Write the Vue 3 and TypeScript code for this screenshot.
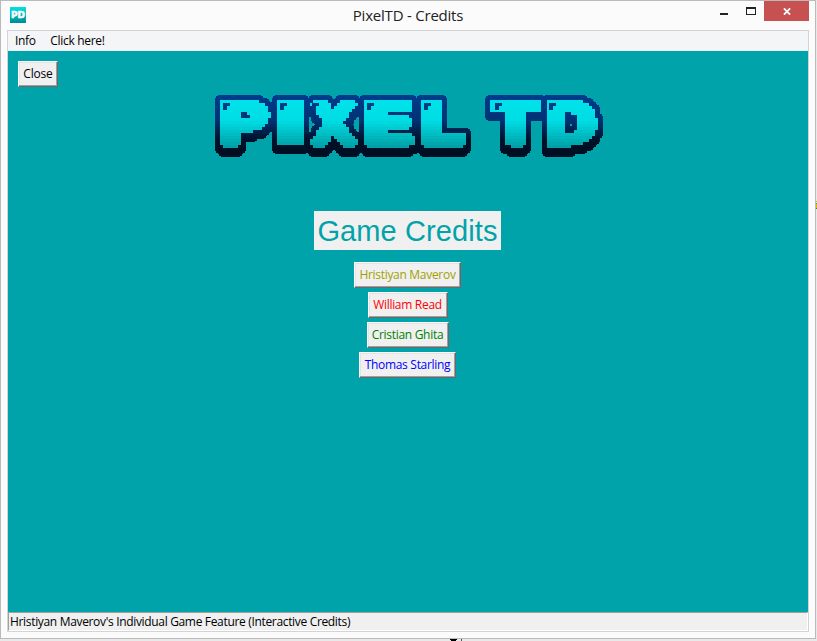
<script setup lang="ts">
interface Letter { char: string; x: number; sx: number }
interface Credit { name: string; color: string; width: number }

const menu = ['Info', 'Click here!']

const letters: Letter[] = [
  { char: 'P', x: 9.2, sx: 1.26 },
  { char: 'I', x: 62.9, sx: 1.85 },
  { char: 'X', x: 103.4, sx: 1.03 },
  { char: 'E', x: 152.6, sx: 1.46 },
  { char: 'L', x: 209.6, sx: 1.35 },
  { char: 'T', x: 285.7, sx: 1.15 },
  { char: 'D', x: 335, sx: 1.16 },
]
const glints = [15, 72, 104, 159, 216, 287, 341]

const place = (l: Letter) => `translate(${l.x} 53) scale(${l.sx} 1)`

const credits: Credit[] = [
  { name: 'Hristiyan Maverov', color: '#a2a000', width: 107 },
  { name: 'William Read', color: '#ff0000', width: 80 },
  { name: 'Cristian Ghita', color: '#008000', width: 82 },
  { name: 'Thomas Starling', color: '#0000ff', width: 97 },
]
</script>

<template>
  <div class="desktop">
    <div class="window">
      <header class="titlebar">
        <svg class="appicon" width="16" height="16" viewBox="0 0 16 16">
          <defs>
            <linearGradient id="ico" x1="0" y1="0" x2="0" y2="1">
              <stop offset="0" stop-color="#00e3e6" /><stop offset="1" stop-color="#008c94" />
            </linearGradient>
          </defs>
          <rect width="16" height="16" fill="url(#ico)" />
          <text x="1" y="10.9" class="icotext" textLength="14" lengthAdjust="spacingAndGlyphs">PD</text>
        </svg>
        <h1 class="title">PixelTD - Credits</h1>
        <div class="controls">
          <svg width="54" height="21" viewBox="0 0 54 21" shape-rendering="crispEdges">
            <path d="M10 12h8v2h-8z" fill="#222" />
            <path d="M36 6h10v8H36z M37 8v5h8V8z" fill="#222" fill-rule="evenodd" />
          </svg>
          <div class="close">
            <svg width="8" height="7" viewBox="0 0 8 7"><path d="M.9.4l6.2 6.2M7.1.4L.9 6.6" stroke="#fff" stroke-width="1.8" /></svg>
          </div>
        </div>
      </header>

      <div class="client">
        <nav class="menu"><span v-for="m in menu" :key="m">{{ m }}</span></nav>
        <main class="game">
          <button class="btn closebtn">Close</button>
          <svg class="logo" width="400" height="74" viewBox="0 0 400 74" role="img" aria-label="Pixel TD">
            <defs>
              <linearGradient id="rim" gradientUnits="userSpaceOnUse" x1="0" y1="4" x2="0" y2="64">
                <stop offset="0" stop-color="#003b8c" /><stop offset=".42" stop-color="#003375" />
                <stop offset=".75" stop-color="#001129" /><stop offset="1" stop-color="#000e22" />
              </linearGradient>
              <linearGradient id="face" gradientUnits="userSpaceOnUse" x1="0" y1="-45" x2="0" y2="4">
                <stop offset="0" stop-color="#00e3eb" /><stop offset=".45" stop-color="#00dce3" />
                <stop offset="1" stop-color="#009da3" />
              </linearGradient>
              <!-- samples one pixel per cell, then grows it to fill the cell -->
              <filter id="blocks" filterUnits="userSpaceOnUse" x="0" y="0" width="400" height="74" color-interpolation-filters="sRGB">
                <feFlood x="1" y="1" width="1" height="1" flood-color="#000" result="seed" />
                <feOffset in="seed" x="0" y="0" width="3" height="3" result="cell" />
                <feTile in="cell" result="grid" />
                <feComposite in="SourceGraphic" in2="grid" operator="in" />
                <feMorphology operator="dilate" radius="1" />
                <feComponentTransfer><feFuncA type="discrete" tableValues="0 1" /></feComponentTransfer>
              </filter>
              <!-- rounded ring plus a downward extrusion, as a white mask -->
              <filter id="extrude" filterUnits="userSpaceOnUse" x="0" y="0" width="400" height="74" color-interpolation-filters="sRGB">
                <feMorphology in="SourceGraphic" operator="dilate" radius="5 2" result="wide" />
                <feMorphology in="SourceGraphic" operator="dilate" radius="2 5" result="tall" />
                <feMorphology in="SourceGraphic" operator="dilate" radius="4 4" result="mid" />
                <feMerge result="ring"><feMergeNode in="wide" /><feMergeNode in="tall" /><feMergeNode in="mid" /></feMerge>
                <feOffset in="ring" dy="2" result="mid2" />
                <feOffset in="ring" dy="4" result="low" />
                <feMerge><feMergeNode in="ring" /><feMergeNode in="mid2" /><feMergeNode in="low" /></feMerge>
                <feColorMatrix values="0 0 0 0 1  0 0 0 0 1  0 0 0 0 1  0 0 0 1 0" />
              </filter>
              <mask id="rimshape" maskUnits="userSpaceOnUse" x="0" y="0" width="400" height="74">
                <g filter="url(#extrude)"><use href="#wordmark" /></g>
              </mask>
            </defs>
            <rect width="400" height="74" fill="url(#rim)" mask="url(#rimshape)" />
            <g id="wordmark" class="wordmark" filter="url(#blocks)">
              <text v-for="l in letters" :key="l.char" :transform="place(l)">{{ l.char }}</text>
            </g>
            <g fill="#003b85" shape-rendering="crispEdges">
              <path v-for="g in glints" :key="g" :d="`M${g} 12h7v3h-3v4h-4z`" />
            </g>
          </svg>
          <h2 class="heading">Game Credits</h2>
          <div class="credits">
            <button v-for="c in credits" :key="c.name" class="btn" :style="{ color: c.color, width: c.width + 'px' }">{{ c.name }}</button>
          </div>
        </main>
        <footer class="status">Hristiyan Maverov's Individual Game Feature (Interactive Credits)</footer>
      </div>
    </div>
    <svg class="behind" width="817" height="2" viewBox="0 0 817 2"><path d="M450 0h7v1h-1v1h-5v-1h-1z" fill="#000" /><path d="M461 0h1v2h-1z" fill="#555" /></svg>
    <i class="sliver"></i>
  </div>
</template>

<style>
body { overflow: hidden; }
</style>
<style scoped>
.desktop { width: 817px; height: 641px; position: relative; background: #e9e9e9; overflow: hidden; font-family: "Open Sans", "Noto Sans", sans-serif; font-size: 12px; color: #000; }
.window { box-sizing: border-box; width: 816px; height: 639px; border: 1px solid #bababa; background: #fbfbfb; padding: 0 6px 6px 6px; display: flex; flex-direction: column; }
.titlebar { height: 29px; flex: none; display: grid; grid-template-columns: 17px 1fr; position: relative; }
.appicon { margin: 6px 0 0 3px; }
.icotext { font: 700 8px "DejaVu Sans", sans-serif; fill: #fff; stroke: #fff; stroke-width: .5; }
.title { margin: 0; padding-right: 17px; text-align: center; font-size: 15px; font-weight: 400; line-height: 29px; letter-spacing: -.22px; color: #222; }
.controls { position: absolute; right: 0; top: 0; display: flex; }
.close { width: 45px; height: 20px; background: #c75050; display: flex; align-items: center; justify-content: center; }
.client { flex: 1; min-height: 0; display: flex; flex-direction: column; border: 1px solid #d3d3d3; }
.menu { box-sizing: border-box; height: 20px; flex: none; display: flex; gap: 14.5px; padding-left: 7px; line-height: 20px; background: #f4f5f7; border-bottom: 1px solid #ebebeb; letter-spacing: -.3px; }
.game { flex: 1; min-height: 0; display: flex; flex-direction: column; align-items: center; background: #00a3aa; padding: 10px 1px 0 0; }
.btn { box-sizing: border-box; height: 26px; padding: 0 0 2px; border: 1px solid; border-color: #fff #696969 #696969 #fff; box-shadow: inset -1px -1px #a0a0a0, inset 1px 1px #e3e3e3; background: #f0f0f0; font: inherit; white-space: nowrap; letter-spacing: -.3px; display: flex; align-items: center; justify-content: center; }
.closebtn { align-self: flex-start; width: 40px; margin-left: 10px; letter-spacing: -.2px; }
.logo { margin-top: 4px; display: block; }
.wordmark { font: 700 56.2px "DejaVu Sans", sans-serif; fill: url(#face); stroke: url(#face); stroke-width: 6.4px; }
.wordmark text { vector-effect: non-scaling-stroke; stroke-linejoin: bevel; }
.heading { box-sizing: border-box; margin: 46px 0 0; width: 187px; height: 39px; padding-top: 1px; background: #f0f0f0; color: #00a3aa; font: 400 29px/39px "Liberation Sans", Arial, sans-serif; letter-spacing: .1px; text-align: center; }
.credits { margin-top: 12px; display: flex; flex-direction: column; align-items: center; gap: 4px; }
.status { box-sizing: border-box; height: 19px; flex: none; border: 1px solid; border-color: #a0a0a0 #fff #fff #a0a0a0; background: #f0f0f0; padding-left: 1px; line-height: 17px; white-space: nowrap; letter-spacing: -.33px; }
.behind { display: block; }
.sliver { position: absolute; left: 816px; top: 201px; width: 1px; height: 8px; background: linear-gradient(#d8b800 0 1px, #e9e9e9 1px 2px, #4a4 2px 3px, #d8b800 3px 7px, #2a8a2a 7px); }
</style>
